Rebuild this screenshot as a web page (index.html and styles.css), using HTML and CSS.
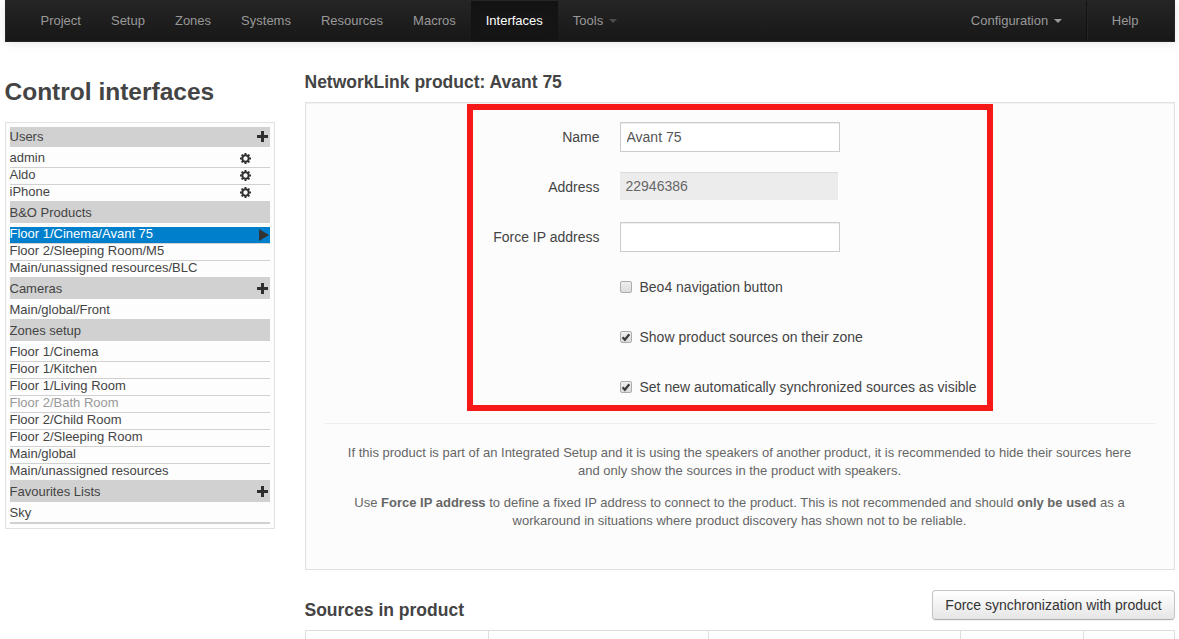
FILE: index.html
```html
<!DOCTYPE html>
<html lang="en">
<head>
<meta charset="utf-8">
<title>Control interfaces</title>
<link rel="stylesheet" href="styles.css">
</head>
<body>
<svg width="0" height="0" class="defs">
  <defs>
    <symbol id="plus" viewBox="0 0 11 11"><path d="M4 0h3v4h4v3H7v4H4V7H0V4h4z"/></symbol>
    <symbol id="cog" viewBox="0 0 11 11">
      <circle cx="5.500" cy="5.500" r="3.200" fill="none" stroke="#2f2f2f" stroke-width="2"/>
      <path d="M5.500 0v1.800M5.500 9.200V11M0 5.500h1.800M9.200 5.500H11M1.600 1.600l1.300 1.300M8.100 8.100l1.300 1.300M9.400 1.600L8.100 2.900M2.900 8.100L1.600 9.400" fill="none" stroke="#2f2f2f" stroke-width="2"/>
    </symbol>
    <symbol id="check" viewBox="0 0 10 10"><path d="M1.600 5.200L3.900 7.700 8.300 2.300" fill="none" stroke="#3c3c3c" stroke-width="2.300"/></symbol>
  </defs>
</svg>
<nav class="navbar">
  <div class="menu">
    <a>Project</a><a>Setup</a><a>Zones</a><a>Systems</a><a>Resources</a><a>Macros</a><a class="active">Interfaces</a><a>Tools <b class="caret dim"></b></a>
  </div>
  <div class="menu">
    <a>Configuration <b class="caret"></b></a><span class="divider"></span><a>Help</a>
  </div>
</nav>
<div class="page">
  <aside>
    <h2>Control interfaces</h2>
    <div class="side">
      <h5>Users<svg class="plus"><use href="#plus"/></svg></h5>
      <ul>
        <li>admin<svg class="cog"><use href="#cog"/></svg></li>
        <li>Aldo<svg class="cog"><use href="#cog"/></svg></li>
        <li>iPhone<svg class="cog"><use href="#cog"/></svg></li>
      </ul>
      <h5>B&amp;O Products</h5>
      <ul>
        <li class="selected">Floor 1/Cinema/Avant 75<svg class="arrow" viewBox="0 0 10 12"><path d="M0 0l10 6-10 6z"/></svg></li>
        <li>Floor 2/Sleeping Room/M5</li>
        <li>Main/unassigned resources/BLC</li>
      </ul>
      <h5>Cameras<svg class="plus"><use href="#plus"/></svg></h5>
      <ul>
        <li>Main/global/Front</li>
      </ul>
      <h5>Zones setup</h5>
      <ul>
        <li>Floor 1/Cinema</li>
        <li>Floor 1/Kitchen</li>
        <li>Floor 1/Living Room</li>
        <li class="muted">Floor 2/Bath Room</li>
        <li>Floor 2/Child Room</li>
        <li>Floor 2/Sleeping Room</li>
        <li>Main/global</li>
        <li>Main/unassigned resources</li>
      </ul>
      <h5>Favourites Lists<svg class="plus"><use href="#plus"/></svg></h5>
      <ul>
        <li>Sky</li>
      </ul>
    </div>
  </aside>
  <main>
    <h4>NetworkLink product: Avant 75</h4>
    <section class="well">
      <div class="form">
        <div class="row"><label>Name</label><input class="field" type="text" value="Avant 75"></div>
        <div class="row"><label>Address</label><span class="readonly">22946386</span></div>
        <div class="row"><label>Force IP address</label><input class="field" type="text"></div>
        <div class="row"><label></label><span class="box"></span>Beo4 navigation button</div>
        <div class="row"><label></label><span class="box"><svg><use href="#check"/></svg></span>Show product sources on their zone</div>
        <div class="row"><label></label><span class="box"><svg><use href="#check"/></svg></span>Set new automatically synchronized sources as visible</div>
      </div>
      <div class="help">
        <p>If this product is part of an Integrated Setup and it is using the speakers of another product, it is recommended to hide their sources here<br>and only show the sources in the product with speakers.</p>
        <p>Use <strong>Force IP address</strong> to define a fixed IP address to connect to the product. This is not recommended and should <strong>only be used</strong> as a<br>workaround in situations where product discovery has shown not to be reliable.</p>
      </div>
      <div class="highlight"></div>
    </section>
    <div class="sources">
      <h4>Sources in product</h4>
      <button>Force synchronization with product</button>
    </div>
    <div class="table"><i></i><i></i><i></i><i></i><i></i></div>
  </main>
</div>
</body>
</html>
```

FILE: styles.css
```css
* { box-sizing: border-box; }
html, body { height: 100%; }
body {
  margin: 0;
  padding: 0 4.5px;
  overflow: hidden;
  background: #fff;
  color: #444;
  font: 14px/20px "Liberation Sans", Arial, sans-serif;
}
.defs { position: absolute; }
h2, h4, h5, p, ul { margin: 0; padding: 0; }

.navbar {
  display: flex;
  justify-content: space-between;
  height: 42px;
  padding: 0 20px;
  border: 1px solid #252525;
  background: linear-gradient(#252525, #171717);
  box-shadow: 0 1px 10px rgba(0, 0, 0, .1);
  font-size: 13px;
}
.menu { display: flex; }
.menu a {
  padding: 10px 15px;
  color: #999;
  line-height: 19px;
  white-space: nowrap;
}
.menu .active {
  background: #151515;
  box-shadow: inset 0 3px 8px rgba(0, 0, 0, .125);
  color: #fff;
}
.caret {
  display: inline-block;
  margin: 8px 0 0 2px;
  border: 4px solid transparent;
  border-top-color: #999;
  border-bottom: 0;
  vertical-align: top;
}
.caret.dim { border-top-color: #4c4c4c; }
.divider {
  margin: 0 9px;
  border-left: 1px solid #111;
  border-right: 1px solid #252525;
}

.page { display: flex; gap: 30px; }
aside { width: 270px; flex: none; padding-top: 30px; }
h2 { font-size: 24.5px; line-height: 40px; margin-bottom: 10px; }
.side {
  padding: 4px;
  border: 1px solid #e1e1e1;
  background: #fdfdfd;
  font-size: 13px;
}
.side h5 {
  display: flex;
  align-items: center;
  justify-content: space-between;
  height: 20px;
  padding-right: 2px;
  background: #d1d1d1;
  font-size: 13px;
  font-weight: normal;
}
.side ul {
  padding-top: 4px;
  border-bottom: 1px solid #d1d1d1;
  list-style: none;
}
.side li {
  display: flex;
  align-items: center;
  justify-content: space-between;
  height: 17px;
  border-bottom: 1px solid #d1d1d1;
  line-height: 14px;
  padding-bottom: 2px;
}
.plus { width: 11px; height: 11px; margin-bottom: 1px; fill: #2f2f2f; }
.cog { width: 11px; height: 11px; margin: 1px 19px 0 0; }
.selected { background: #007fcc; background-clip: padding-box; color: #fff; }
.arrow { width: 10px; height: 12px; margin: 1px 1px 0 0; fill: #333; }
.side .muted { color: #999; }

main { flex: 1; padding-top: 30px; }
h4 { font-size: 17.5px; line-height: 20px; }
.well {
  position: relative;
  height: 468px;
  margin-top: 10px;
  padding: 19px;
  border: 1px solid #e1e1e1;
  background: #fcfcfc;
  box-shadow: inset 0 1px 1px rgba(0, 0, 0, .05);
}
.form { display: grid; grid-auto-rows: 30px; row-gap: 20px; }
.row { display: flex; align-items: center; white-space: nowrap; }
.row label { width: 275px; margin-right: 20px; text-align: right; }
.field {
  width: 220px;
  height: 30px;
  padding: 4px 6px;
  border: 1px solid #ccc;
  background: #fff;
  box-shadow: inset 0 1px 1px rgba(0, 0, 0, .075);
  color: #555;
  font: inherit;
}
.readonly {
  align-self: flex-start;
  width: 218px;
  height: 28px;
  padding: 4px 6px;
  background: #ececec;
  box-shadow: inset 0 1px 1px rgba(0, 0, 0, .075);
  color: #666;
}
.box {
  display: flex;
  width: 12px;
  height: 12px;
  margin-right: 8px;
  border: 1px solid #acacac;
  border-radius: 2px;
  background: linear-gradient(#efefef, #dcdcdc);
}
.box svg { width: 10px; height: 10px; }
.help {
  margin-top: 21px;
  padding-top: 20px;
  border-top: 1px solid #eee;
  color: #666;
  font-size: 13px;
  line-height: 18px;
  text-align: center;
  white-space: nowrap;
}
.help p { margin-bottom: 14px; }
.highlight {
  position: absolute;
  left: 161px;
  top: 1px;
  width: 526px;
  height: 307px;
  border: 6px solid #f71818;
}
.sources {
  display: flex;
  align-items: flex-end;
  justify-content: space-between;
  height: 30px;
  margin: 20px 0 10px;
}
button {
  width: 243px;
  height: 30px;
  padding: 0 0 0 1px;
  border: 1px solid #c5c5c5;
  border-bottom-color: #adadad;
  border-radius: 4px;
  background: linear-gradient(#fff, #e6e6e6);
  box-shadow: 0 1px 2px rgba(0, 0, 0, .05);
  color: #333;
  font: inherit;
}
.table {
  display: grid;
  grid-template-columns: 183px 220px 252px 123px 1fr;
  height: 40px;
  border: 1px solid #ddd;
  border-left: 0;
}
.table i { border-left: 1px solid #ddd; }
```
